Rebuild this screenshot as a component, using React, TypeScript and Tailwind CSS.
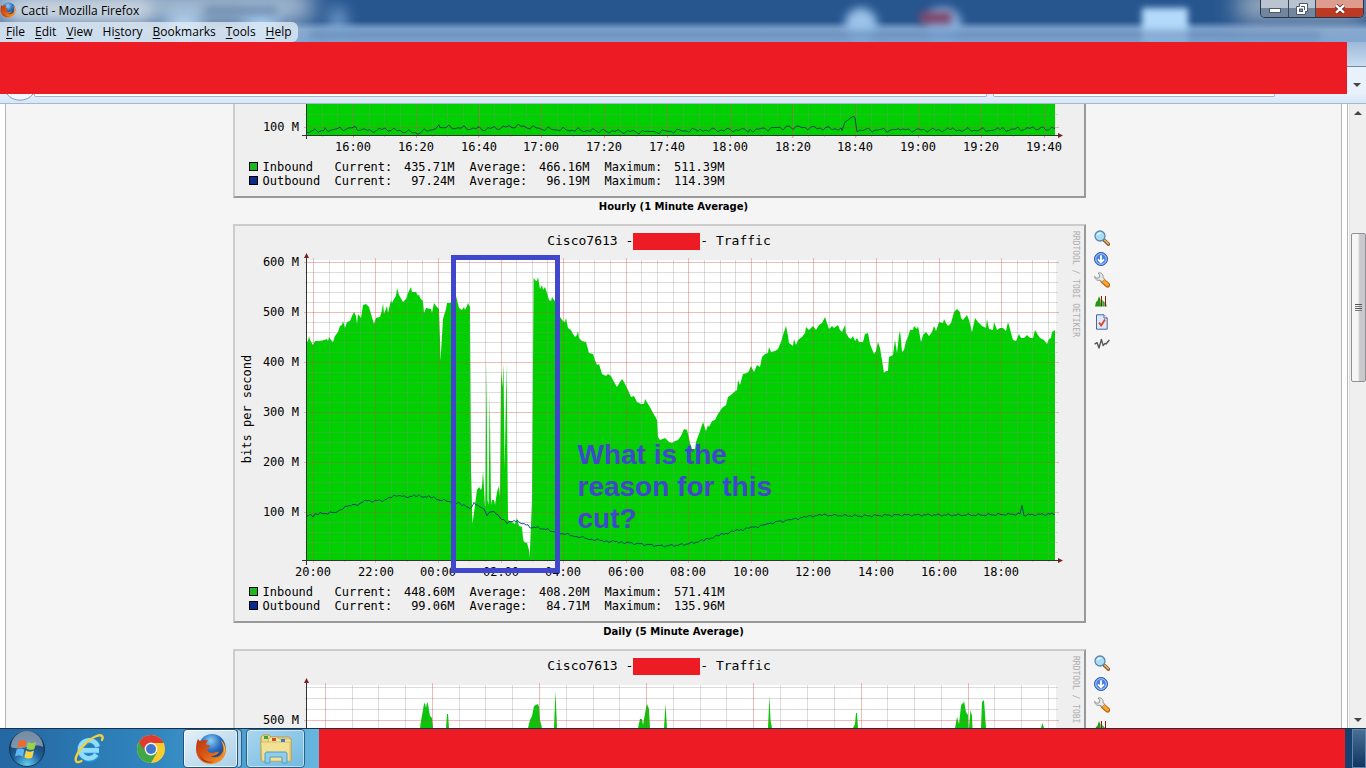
import type { ReactNode } from "react";

type Point = [number, number];

type Series = {
  name: string;
  color: string;
  current: string;
  average: string;
  maximum: string;
};

const MENU = [
  { before: "", key: "F", after: "ile" },
  { before: "", key: "E", after: "dit" },
  { before: "", key: "V", after: "iew" },
  { before: "Hi", key: "s", after: "tory" },
  { before: "", key: "B", after: "ookmarks" },
  { before: "", key: "T", after: "ools" },
  { before: "", key: "H", after: "elp" },
];

const HOURLY: Series[] = [
  { name: "Inbound", color: "bg-[#1fb81f]", current: "435.71M", average: "466.16M", maximum: "511.39M" },
  { name: "Outbound", color: "bg-[#0a2a8c]", current: "97.24M", average: "96.19M", maximum: "114.39M" },
];

const DAILY: Series[] = [
  { name: "Inbound", color: "bg-[#1fb81f]", current: "448.60M", average: "408.20M", maximum: "571.41M" },
  { name: "Outbound", color: "bg-[#0a2a8c]", current: "99.06M", average: "84.71M", maximum: "135.96M" },
];

const DAILY_IN =
  "306,343 308,341 309,336 310,340 313,345 315,341 320,341 324,340 327,339 328,341 329,337 331,340 333,342 335,336 338,332 340,326 342,325 343,321 345,328 347,322 350,321 352,316 354,312 356,316 357,324 358,314 361,318 363,305 366,304 369,307 371,314 374,324 376,318 380,317 382,310 383,303 384,314 387,306 388,313 391,300 392,303 394,299 396,296 397,288 399,295 403,302 406,299 408,293 409,291 411,287 412,292 416,292 418,296 419,294 420,298 423,301 424,313 426,308 431,309 432,313 434,303 436,306 439,309 440,340 440.5,361 443,319 446,309 447,303 450,303 452,302 454,302 455,292 457,300 459,308 462,310 464,307 465,310 467,306 468,303 470,307 471,470 472.5,524 475,505 477,490 479,487 481,490 482,487 483,471 484,487 485,507 485.4,505 486.4,361 487.5,500 488.6,505 489.7,393 491,505 492,500 494,500 495,505 497,492 499,486 500,497 501,370 502.5,387 503.5,364 504.6,470 506.6,363 508,520 515,524 517,518 519,526 522,527 523,538 524,542 527,543 529,550 529.7,557 532,500 533.6,278 536,281 537,281 538,277 540,289 542,285 543,290 545,287 547,293 549,300 551,301 552,297 554,300 556,302 558,308 560,317 563,321 565,322 566,318 568,328 571,330 573,334 575,337 577,335 578,331 579,338 582,341 586,342 589,353 593,354 595,360 597,365 599,364 602,374 606,376 608,374 611,376 614,382 617,387 620,382 622,379 624,382 628,390 631,397 634,396 637,402 641,404 644,404 645,399 648,404 651,409 653,413 656,418 657,420 658,437 660,440 665,438 669,442 672,443 675,441 678,440 681,436 684,429 687,430 689,438 690,443 692,449 695,449 696,442 699,434 703,422 704,425 706,431 708,425 709,427 712,421 715,420 718,414 722,408 726,405 728,397 731,395 734,392 737,390 738,380 740,385 743,374 747,373 749,371 751,366 754,372 757,365 760,367 762,357 765,354 768,353 769,347 771,352 775,351 778,349 781,342 783,335 786,326 788,336 789,343 793,346 794,339 796,345 798,340 802,337 805,333 806,327 809,330 813,326 816,330 819,325 822,323 825,317 827,323 829,329 832,326 834,328 838,325 840,330 842,332 845,325 846,333 849,338 851,339 853,336 855,341 857,338 859,342 863,342 865,334 868,333 870,344 874,354 876,351 878,342 880,348 882,360 884,373 886,371 888,371 889,357 893,355 895,340 897,353 899,335 900,331 901,340 902,352 904,350 906,341 908,337 910,330 913,330 914,326 917,329 918,326 919,331 921,342 923,335 926,332 929,336 932,332 934,326 936,331 939,322 943,323 944,319 946,323 948,326 951,323 954,312 957,309 960,312 961,318 963,320 967,315 969,320 972,332 975,318 978,322 982,326 986,328 987,319 989,329 993,330 994,322 997,330 1000,328 1003,328 1006,331 1008,322 1010,329 1013,340 1016,341 1019,334 1021,338 1024,338 1027,335 1030,338 1033,338 1035,330 1038,335 1040,338 1044,340 1047,344 1049,339 1051,338 1052,332 1055,330";

const DAILY_OUT: Point[] = [
  [306, 515], [313, 516], [318, 514], [330, 513], [337, 512], [343, 508], [352, 505], [360, 504], [365, 501],
  [375, 501], [385, 500], [392, 497], [398, 495], [404, 497], [415, 496], [430, 497], [440, 500], [455, 502],
  [462, 505], [470, 508], [474, 504], [482, 507], [487, 515], [492, 511], [500, 517], [507, 523], [512, 521],
  [520, 522], [530, 527], [540, 528], [552, 531], [560, 533], [575, 536], [590, 539], [605, 541], [620, 542],
  [640, 544], [662, 546], [680, 545], [692, 543], [705, 540], [720, 535], [735, 531], [750, 528], [765, 525],
  [775, 522], [790, 520], [805, 517], [820, 515], [860, 516], [900, 515], [940, 515], [980, 515], [1020, 514],
  [1022, 506], [1024, 515], [1055, 514],
];

const HOURLY_OUT: Point[] = [
  [306, 132], [325, 130], [355, 128], [370, 131], [385, 129], [418, 133], [440, 127], [485, 129], [518, 126],
  [545, 129], [600, 131], [650, 132], [700, 130], [750, 130], [790, 127], [842, 129], [845, 122], [848, 119],
  [855, 118], [857, 130], [900, 130], [950, 130], [1000, 130], [1040, 128], [1055, 129],
];

const WEEKLY_SPIKES =
  "M420 728 L421 721 424 704 425 703 426 708 427 702 428 704 430 716 432 718 433 728Z M446 728 L447 714 448 714 449 728Z M528 728 L530 720 532 716 534 706 538 704 539 707 540 720 542 728Z M554 728 L555.5 691 557 728Z M638 728 L640 719 642 719 643 725 646 708 647 704 649 709 650 728Z M664 728 L665.5 704 667 728Z M768 728 L769.5 696 770.5 720 772 728Z M853 728 L855 724 856 713 857 713 858 728Z M955 728 L957 717 959 724 961 706 962 703 963 704 964 701 966 712 968 715 968.5 728Z M969 728 L970.5 710 972 716 972.5 728Z M981 728 L982 702 984 700 986 728Z M1041 728 L1042.5 723 1044 728Z";

// small repeatable wobble so that the outbound line is not perfectly smooth
function jagged(points: Point[], amount: number, step: number) {
  const out: string[] = [];
  for (let i = 0; i < points.length - 1; i++) {
    const [x1, y1] = points[i];
    const [x2, y2] = points[i + 1];
    for (let x = x1; x < x2; x += step) {
      const y = y1 + ((y2 - y1) * (x - x1)) / (x2 - x1);
      out.push(`${x},${(y + Math.sin(x * 1.9) * Math.cos(x * 0.63) * amount).toFixed(1)}`);
    }
  }
  out.push(points[points.length - 1].join(","));
  return out.join(" ");
}

function range(from: number, to: number, step: number) {
  const values: number[] = [];
  for (let v = from; v <= to; v += step) {
    values.push(Math.floor(v) + 0.5);
  }
  return values;
}

function Grid({
  top,
  bottom,
  minorX,
  majorX,
  minorY,
  majorY,
}: {
  top: number;
  bottom: number;
  minorX: number[];
  majorX: number[];
  minorY: number[];
  majorY: number[];
}) {
  return (
    <g>
      {minorX.map((x) => (
        <path key={x} d={`M${x} ${top}V${bottom + 2}`} stroke="#8c8c8c" strokeOpacity="0.3" />
      ))}
      {minorY.map((y) => (
        <path key={y} d={`M305 ${y}H1058`} stroke="#8c8c8c" strokeOpacity="0.3" />
      ))}
      {majorX.map((x) => (
        <path key={x} d={`M${x} ${top - 2}V${bottom + 3}`} stroke="#c84b46" strokeOpacity="0.36" />
      ))}
      {majorY.map((y) => (
        <path key={y} d={`M304 ${y}H1059`} stroke="#c84b46" strokeOpacity="0.36" />
      ))}
    </g>
  );
}

function AxisText({ x, y, anchor, children }: { x: number; y: number; anchor: "middle" | "end"; children: ReactNode }) {
  return (
    <text x={x} y={y} textAnchor={anchor} className="fill-black font-['DejaVu_Sans_Mono',monospace] text-[12px]">
      {children}
    </text>
  );
}

function HourlyPlot() {
  const labels = ["16:00", "16:20", "16:40", "17:00", "17:20", "17:40", "18:00", "18:20", "18:40", "19:00", "19:20", "19:40"];
  return (
    <svg viewBox="235 104 835 51" className="block w-full" role="img" aria-label="Hourly traffic">
      <rect x="306" y="104" width="749" height="31" fill="#00cf00" />
      <Grid
        top={100}
        bottom={135}
        minorX={range(322.2, 1050, 15.7)}
        majorX={labels.map((_, i) => Math.floor(353.3 + i * 62.8) + 0.5)}
        minorY={[114.5]}
        majorY={[127.5]}
      />
      <polyline points={jagged(HOURLY_OUT, 2.6, 3)} fill="none" stroke="#003c5a" strokeOpacity="0.85" />
      <path d="M306.5 104V139 M302 135.5H1060" stroke="#333" fill="none" />
      <path d="M1058 133L1063 135.5 1058 138Z" fill="#7a2020" />
      <AxisText x={299} y={131} anchor="end">100 M</AxisText>
      {labels.map((label, i) => (
        <AxisText key={label} x={353 + Math.round(i * 62.8)} y={151} anchor="middle">{label}</AxisText>
      ))}
    </svg>
  );
}

function DailyPlot() {
  const labels = ["20:00", "22:00", "00:00", "02:00", "04:00", "06:00", "08:00", "10:00", "12:00", "14:00", "16:00", "18:00"];
  return (
    <svg viewBox="235 252 835 328" className="block w-full" role="img" aria-label="Daily traffic">
      <rect x="306" y="260" width="750" height="300" fill="#fff" />
      <polygon points={`306,560 ${DAILY_IN} 1055,560`} fill="#00cf00" />
      <Grid
        top={260}
        bottom={560}
        minorX={range(313.4, 1056, 15.64).filter((_, i) => i % 4 !== 0)}
        majorX={labels.map((_, i) => Math.floor(313.4 + i * 62.56) + 0.5)}
        minorY={range(272, 555, 10).filter((y) => (y - 262.5) % 50 !== 0)}
        majorY={range(262, 520, 50)}
      />
      <polyline points={jagged(DAILY_OUT, 1.6, 2)} fill="none" stroke="#003878" strokeOpacity="0.85" />
      <path d="M306.5 256V565 M302 560.5H1060" stroke="#333" fill="none" />
      <path d="M304 258L306.5 253 309 258Z M1058 558L1063 560.5 1058 563Z" fill="#7a2020" />
      {[600, 500, 400, 300, 200, 100].map((v, i) => (
        <AxisText key={v} x={299} y={266 + i * 50} anchor="end">{`${v} M`}</AxisText>
      ))}
      {labels.map((label, i) => (
        <AxisText key={label} x={313 + Math.round(i * 62.56)} y={576} anchor="middle">{label}</AxisText>
      ))}
      <g transform="translate(251 409) rotate(-90)">
        <AxisText x={0} y={0} anchor="middle">bits per second</AxisText>
      </g>
    </svg>
  );
}

function WeeklyPlot() {
  return (
    <svg viewBox="235 677 835 51" className="block w-full" role="img" aria-label="Weekly traffic">
      <rect x="306" y="685" width="750" height="43" fill="#fff" />
      <path d={WEEKLY_SPIKES} fill="#0cc40c" />
      <Grid
        top={685}
        bottom={730}
        minorX={range(325.3, 1056, 26.78).filter((_, i) => i % 4 !== 0)}
        majorX={range(325.3, 1000, 107.15)}
        minorY={[687.5, 698.5, 709.5]}
        majorY={[720.5]}
      />
      <path d="M306.5 681V728" stroke="#333" />
      <path d="M304 683L306.5 678 309 683Z" fill="#7a2020" />
      <AxisText x={299} y={724} anchor="end">500 M</AxisText>
    </svg>
  );
}

function Legend({ rows }: { rows: Series[] }) {
  return (
    <table className="mt-[5px] ml-[14px] table-fixed text-left text-[12px] leading-[14px]">
      <tbody>
        {rows.map((row) => (
          <tr key={row.name}>
            <td className="w-[14px] p-0 pt-[2px] align-top">
              <span className={`block size-[9px] border border-black ${row.color}`} />
            </td>
            <th scope="row" className="w-[72px] p-0 font-normal">{row.name}</th>
            <td className="w-[69px] p-0">Current:</td>
            <td className="w-[51px] p-0 text-right">{row.current}</td>
            <td className="w-[84px] p-0 pl-[15px]">Average:</td>
            <td className="w-[51px] p-0 text-right">{row.average}</td>
            <td className="w-[84px] p-0 pl-[15px]">Maximum:</td>
            <td className="w-[51px] p-0 text-right">{row.maximum}</td>
          </tr>
        ))}
      </tbody>
    </table>
  );
}

function GraphTitle() {
  return (
    <h2 className="flex h-[26px] items-center justify-center pt-1 pl-[14px] text-[13px] leading-[22px] whitespace-pre">
      <span>Cisco7613 -</span>
      <span className="h-[17px] w-[67px] bg-[#ed1c24]" />
      <span>- Traffic</span>
    </h2>
  );
}

function Graph({ children, clipped, actions }: { children: ReactNode; clipped?: boolean; actions?: boolean }) {
  return (
    <section className="mx-auto flex w-full max-w-[882px] items-start gap-2">
      <div
        className={`flex flex-1 border-2 border-t-[#ccc] border-r-[#999] border-b-[#999] border-l-[#ccc] bg-[#efefef] font-['DejaVu_Sans_Mono',monospace] text-black ${
          clipped ? "border-t-0" : ""
        }`}
      >
        <div className="relative min-w-0 flex-1 pb-2">{children}</div>
        <div className="w-[14px] pr-[3px]">
          {!clipped && (
            <div className="pt-[5px] text-[8px] leading-[11px] whitespace-nowrap text-[#adadad] [writing-mode:vertical-rl]">
              RRDTOOL / TOBI OETIKER
            </div>
          )}
        </div>
      </div>
      <div className="flex w-[21px] flex-col gap-[5px] pt-[6px]">{actions && <GraphActions />}</div>
    </section>
  );
}

function GraphActions() {
  return (
    <>
      <a href="#zoom" aria-label="Zoom graph">
        <svg viewBox="0 0 16 16" className="size-4">
          <path d="M10 10L14.5 14.2" stroke="#8a5a2c" strokeWidth="3.4" strokeLinecap="round" />
          <path d="M10.6 10.2L14.4 13.8" stroke="#f0b872" strokeWidth="1.4" strokeLinecap="round" />
          <circle cx="6" cy="6" r="5" fill="#a9dcf5" stroke="#5c88ad" strokeWidth="1.3" />
          <path d="M2.6 6A3.4 3.4 0 0 1 8 3.2C6 3.6 4 4.6 2.6 6Z" fill="#effbff" />
        </svg>
      </a>
      <a href="#csv" aria-label="CSV export">
        <svg viewBox="0 0 16 16" className="size-4">
          <circle cx="7" cy="8" r="6.5" fill="#4a82dd" stroke="#2b55ae" />
          <circle cx="7" cy="8" r="5.3" fill="none" stroke="#a9c8f8" />
          <path d="M7 4.2V11M4 8.3L7 11.3 10 8.3" fill="none" stroke="#fff" strokeWidth="1.8" />
        </svg>
      </a>
      <a href="#source" aria-label="Graph source">
        <svg viewBox="0 0 16 16" className="size-4">
          <path d="M9 9L13.6 13" stroke="#b8630c" strokeWidth="5" strokeLinecap="round" />
          <path d="M9.4 9L13.4 12.6" stroke="#f9a52e" strokeWidth="3.2" strokeLinecap="round" />
          <path
            d="M4.2 1C7 .2 9.6 2.2 9 5.2L10.6 7.4 8 9.8 6 8.2C3.4 9 .8 7.4 .6 4.4L3 6.4 5.2 5.6 5.6 3.2Z"
            fill="#e6e6e6"
            stroke="#8c8c8c"
            strokeWidth="0.9"
          />
        </svg>
      </a>
      <a href="#preview" aria-label="Preview">
        <svg viewBox="0 0 16 16" className="size-4">
          <path d="M1 13.5L2 9 3.4 8 5 3.2 6.4 6 7 13.5Z" fill="#1d9a12" />
          <path d="M7.5 3V13.5M11.5 3V13.5" stroke="#8b1a14" />
          <path d="M8.2 13.5V7L10.8 9.6V13.5Z M12.2 13.5V10.5L13 13.5Z" fill="#3aa92c" />
        </svg>
      </a>
      <a href="#report" aria-label="Report">
        <svg viewBox="0 0 16 16" className="size-4">
          <path d="M2.5 .8H10L13.2 4V15.2H2.5Z" fill="#dbe9fb" stroke="#4d6597" />
          <path d="M10 .8V4H13.2" fill="#fff" stroke="#4d6597" />
          <path d="M5 8.6L7.2 11.4 11 5.6" fill="none" stroke="#d8432e" strokeWidth="1.8" />
        </svg>
      </a>
      <a href="#realtime" aria-label="Realtime view">
        <svg viewBox="0 0 16 16" className="size-4">
          <path
            d="M.6 9.2L3 7.6 5 13 7.4 4.4 9.2 10.6 11 8.4 12 9 15.4 5"
            fill="none"
            stroke="#555"
            strokeWidth="1.4"
            strokeLinejoin="round"
          />
        </svg>
      </a>
    </>
  );
}

function Caption({ children }: { children: ReactNode }) {
  return (
    <p className="h-[26px] text-center font-['DejaVu_Sans',Verdana,sans-serif] text-[10px] leading-[17px] font-bold text-black">
      {children}
    </p>
  );
}

function FirefoxLogo({ className }: { className: string }) {
  return (
    <svg viewBox="0 0 32 32" className={className} aria-hidden="true">
      <defs>
        <radialGradient id="globe" cx="0.45" cy="0.25" r="0.8">
          <stop offset="0" stopColor="#8fd0f4" />
          <stop offset="0.45" stopColor="#2c6fc0" />
          <stop offset="1" stopColor="#142a66" />
        </radialGradient>
        <linearGradient id="fox" x1="0" y1="0" x2="1" y2="1">
          <stop offset="0" stopColor="#b8330f" />
          <stop offset="0.5" stopColor="#dd5c16" />
          <stop offset="1" stopColor="#f6a92c" />
        </linearGradient>
      </defs>
      <circle cx="17" cy="14.5" r="13.5" fill="url(#globe)" />
      <path
        d="M3 6C4 7.2 4.6 8 5.4 8.4 8 6.6 11 6.6 13.4 7.4 12 8.4 11 9.6 10.8 11.4L15.2 12.4C15 14 13 14.8 12.2 15.6 12 18 14 20 17 20 20 20 22 18.4 24 19 22.4 22 18.6 23.4 15.6 23 20 26 26.4 23.6 28 17.6 28.6 14 27.6 10.4 25.8 7.2 30 10.4 31.6 14.6 30.8 19 29.6 26 23.6 31 16 31 7.6 31 1 24.6 1 16.4 1 12 1.8 8.6 3 6Z"
        fill="url(#fox)"
      />
      <path d="M25.8 7.2C30 11 31 17 28.4 22 30 16 28.6 11 25.8 7.2Z" fill="#fbd34b" />
      <path d="M4 20C6 27 13 30 19 28.4 12 31.6 5.4 27.6 4 20Z" fill="#8f260c" />
    </svg>
  );
}

function WindowControls() {
  return (
    <div className="ml-auto mr-[2px] flex h-[18px] overflow-hidden rounded-b-[5px] border border-t-0 border-[#25354d] text-white">
      <button aria-label="Minimize" className="flex w-7 items-end justify-center border-r border-[#33475f] bg-linear-to-b from-[#b9c4d0] from-45% to-[#73869d] to-50% pb-1">
        <svg viewBox="0 0 12 5" className="h-[5px] w-3">
          <rect x="0.5" y="0.5" width="11" height="4" fill="#fff" stroke="#4c5868" />
        </svg>
      </button>
      <button aria-label="Restore" className="flex w-[27px] items-center justify-center border-r border-[#33475f] bg-linear-to-b from-[#b9c4d0] from-45% to-[#73869d] to-50%">
        <svg viewBox="0 0 12 12" className="size-3">
          <path d="M3.5 .5H11.5V8.5H9.5V11.5H.5V3.5H3.5Z" fill="#fff" stroke="#4c5868" />
          <path d="M5 3.5H8.5V7" fill="none" stroke="#4c5868" />
          <rect x="3.5" y="6" width="3" height="2.5" fill="#7f8fa3" stroke="#4c5868" />
        </svg>
      </button>
      <button aria-label="Close" className="flex w-[47px] items-center justify-center bg-linear-to-b from-[#dd9c8e] from-45% to-[#bd3a22] to-50%">
        <svg viewBox="0 0 12 10" className="h-[10px] w-3">
          <path d="M2 1.4L10 8.6M10 1.4L2 8.6" stroke="#5a2a2a" strokeWidth="4" />
          <path d="M2 1.4L10 8.6M10 1.4L2 8.6" stroke="#fff" strokeWidth="2.4" />
        </svg>
      </button>
    </div>
  );
}

function BrowserChrome() {
  return (
    <header className="shrink-0">
      <div className="relative overflow-hidden bg-linear-to-b from-[#27568f] from-50% to-[#82a6d0] to-70%">
        <div className="absolute -top-3 -left-4 h-9 w-[330px] rounded-full bg-[#a9bdd2] blur-md" />
        <div className="absolute top-0 left-2 h-5 w-36 rounded-full bg-[#cfd8e2] blur-sm" />
        <div className="absolute top-3 left-[168px] h-7 w-8 bg-[#b5d3ee] blur-sm" />
        <div className="absolute top-3 left-[245px] h-7 w-8 bg-[#a5cbef] blur-sm" />
        <div className="absolute top-2 left-[332px] h-8 w-3 bg-[#88b0dc] blur-sm" />
        <div className="absolute top-[7px] left-[205px] h-[7px] w-[72px] bg-[#6a87ab] blur-[4px]" />
        <div className="absolute top-2 left-[845px] h-8 w-8 rounded-full bg-[#9cc4ea] blur-[5px]" />
        <div className="absolute top-2 left-[925px] h-8 w-9 rounded-full bg-[#8db8e4] blur-[5px]" />
        <div className="absolute top-3 left-[920px] h-3 w-8 bg-[#7d3f63] blur-[4px]" />
        <div className="absolute top-2 left-[1142px] h-8 w-[46px] bg-[#b4dafb] blur-[3px]" />
        <div className="absolute top-[32px] left-[310px] h-[6px] w-[1010px] bg-[#6288b6] blur-[4px]" />
        <div className="absolute -top-2 right-0 h-7 w-32 bg-[#a9b6c6] blur-md" />

        <div className="relative flex h-[22px] items-start">
          <FirefoxLogo className="mt-[2px] size-4" />
          <h1 className="ml-[5px] font-['Open_Sans','Noto_Sans',sans-serif] text-[12px] leading-[21px] text-black">
            Cacti - Mozilla Firefox
          </h1>
          <WindowControls />
        </div>
        <nav className="relative flex h-5">
          <div className="flex gap-[10px] rounded-r-md bg-[#e4edf6]/75 px-[6px] font-['Open_Sans','Noto_Sans',sans-serif] text-[12px] leading-5 text-black">
            {MENU.map((item) => (
              <button key={item.key + item.after}>
                {item.before}
                <span className="underline underline-offset-2">{item.key}</span>
                {item.after}
              </button>
            ))}
          </div>
        </nav>
      </div>

      <div className="flex h-[52px]">
        <div className="flex-1 bg-[#ed1c24]" />
        <div className="flex w-[19px] flex-col">
          <div className="h-[25px] border-b border-[#7389a4] bg-linear-to-b from-[#9db9d8] to-[#c9ddf2]" />
          <button aria-label="More tools" className="flex flex-1 items-center justify-center bg-[#e9f2fc] pt-2">
            <svg viewBox="0 0 8 4" className="h-1 w-2">
              <path d="M0 0H8L4 4Z" fill="#444" />
            </svg>
          </button>
        </div>
      </div>

      <div className="flex h-[10px] items-start overflow-hidden border-b border-[#a3b9d0] bg-linear-to-b from-[#e6f0fa] to-[#d7e7f7]">
        <svg viewBox="0 0 34 9" className="h-[9px] w-[34px]" aria-hidden="true">
          <path d="M7 0C13 8.2 27 8.2 33 0" fill="#f4f8fc" stroke="#8196b0" />
        </svg>
        <div className="h-[3px] flex-1 rounded-b-xs border border-t-0 border-[#a2b3c8] bg-white" />
        <div className="mr-[91px] ml-[6px] h-[3px] w-[282px] rounded-b-xs border border-t-0 border-[#a2b3c8] bg-white" />
      </div>
    </header>
  );
}

function Scrollbar() {
  return (
    <div className="flex w-[17px] flex-col items-center border-l border-[#e2e2e2] bg-[#efefef]">
      <button aria-label="Scroll up" className="flex h-[17px] w-full items-center justify-center">
        <svg viewBox="0 0 8 4" className="h-1 w-2">
          <path d="M0 4H8L4 0Z" fill="#444" />
        </svg>
      </button>
      <div className="mt-28 flex h-[149px] w-[15px] flex-col items-center justify-center gap-px rounded-xs border border-[#909090] bg-linear-to-r from-[#f6f6f6] from-45% to-[#c9c9cd] to-60%">
        <span className="h-px w-[7px] bg-[#555]" />
        <span className="h-px w-[7px] bg-[#777]" />
        <span className="h-px w-[7px] bg-[#555]" />
        <span className="h-px w-[7px] bg-[#777]" />
      </div>
      <button aria-label="Scroll down" className="mt-auto flex h-[17px] w-full items-center justify-center">
        <svg viewBox="0 0 8 4" className="h-1 w-2">
          <path d="M0 0H8L4 4Z" fill="#444" />
        </svg>
      </button>
    </div>
  );
}

function Taskbar() {
  return (
    <footer className="flex h-10 shrink-0 border-t border-[#1b2f45] bg-[#1b4272]">
      <div className="flex w-[319px] items-stretch bg-linear-to-r from-[#2467a2] via-[#3187c0] to-[#66b6e0]">
        <button aria-label="Start" className="flex w-[54px] items-center justify-center">
          <svg viewBox="0 0 38 38" className="size-[38px]">
            <defs>
              <radialGradient id="orb" cx="0.5" cy="0.95" r="0.85">
                <stop offset="0" stopColor="#5fd0f2" />
                <stop offset="0.5" stopColor="#1f5f9a" />
                <stop offset="1" stopColor="#1c3557" />
              </radialGradient>
            </defs>
            <circle cx="19" cy="19" r="17.5" fill="url(#orb)" stroke="#18344f" />
            <path d="M3 17A16 16 0 0 1 35 17C25 12 13 22 3 17Z" fill="#c6d6e4" opacity="0.55" />
            <path d="M10.6 11.4C13 9.6 16 9.6 18.4 11.2L16.8 18C14.4 16.4 11.6 16.6 9 18Z" fill="#ee6a2c" />
            <path d="M20 12C22.6 13.6 25.4 13.4 28.2 12L26.4 19C23.8 20.4 21 20.2 18.4 18.8Z" fill="#9ad24c" />
            <path d="M8.6 19.6C11.2 18.2 14 18 16.4 19.6L14.8 26.6C12.2 25 9.6 25.2 7 26.4Z" fill="#5fb6f2" />
            <path d="M18 20.4C20.6 22 23.4 22 26 20.6L24.2 27.6C21.6 29 18.8 28.8 16.4 27.2Z" fill="#fbd445" />
          </svg>
        </button>
        <button aria-label="Internet Explorer" className="flex w-[70px] items-center justify-center">
          <svg viewBox="0 0 32 32" className="size-8">
            <path d="M26.4 17.6H9M25 14A9 9 0 1 0 24.2 21.6" fill="none" stroke="#2790d4" strokeWidth="6.6" />
            <path d="M26 17.4H9M24.6 13.8A9 9 0 1 0 23.4 21.4" fill="none" stroke="#90dcfb" strokeWidth="4.6" />
            <path
              d="M29 7C31 3 28 1.2 23.6 3 15.6 6 5.4 16.4 3 24.4 1.8 28.6 4 30.4 8.4 28"
              fill="none"
              stroke="#f3cf3c"
              strokeWidth="2.4"
              strokeLinecap="round"
            />
          </svg>
        </button>
        <button aria-label="Chrome" className="flex w-[54px] items-center justify-center">
          <svg viewBox="0 0 30 30" className="size-[30px]">
            <circle cx="15" cy="15" r="14" fill="#f7cd2e" />
            <path d="M15 15L2.9 8A14 14 0 0 0 15 29L21 18.5Z" fill="#41a646" />
            <path d="M2.9 8A14 14 0 0 1 27.7 9H15A6.4 6.4 0 0 0 9 17Z" fill="#dd3c2f" />
            <circle cx="15" cy="15" r="6.4" fill="#f4f4f4" />
            <circle cx="15" cy="15" r="5" fill="#3f78c8" />
          </svg>
        </button>
        <button aria-label="Firefox" className="ml-[5px] flex w-[55px] items-center justify-center rounded-sm border border-[#24527a] bg-linear-to-br from-[#e3f1f9] to-[#a9cfe6] inset-ring inset-ring-white/70">
          <FirefoxLogo className="size-8" />
        </button>
        <span className="w-1 rounded-r-sm border border-l-0 border-[#2b5f8a] bg-[#a5d0ea]" />
        <button aria-label="Windows Explorer" className="ml-1 flex w-[59px] items-center justify-center rounded-sm border border-[#2b5f8a] bg-linear-to-br from-[#a9d6ee] to-[#72b9e0] inset-ring inset-ring-white/50">
          <svg viewBox="0 0 34 32" className="h-8 w-[34px]">
            <path d="M2 4L4 2H10L12 4H30L32 6V27H2Z" fill="#efd98c" stroke="#b79a45" />
            <path d="M10 5L12 4H18L20 6H32V28H4Z" fill="#f5e6a6" stroke="#c2a752" strokeWidth="0.8" />
            <path d="M2 9H31V28H3Z" fill="#f3e193" stroke="#c2a752" strokeWidth="0.6" />
            <rect x="5" y="3" width="4" height="3" fill="#3aa63a" />
            <rect x="13" y="5" width="4" height="3" fill="#cf4a2a" />
            <rect x="22" y="6" width="4" height="3" fill="#3a78c8" />
            <path d="M6 30V21C6 19.6 7 19 8 19H26C27.4 19 28 19.6 28 21V30H23V24H11V30Z" fill="#8fcdea" stroke="#4f9cc4" />
          </svg>
        </button>
      </div>
      <div className="flex-1 bg-[#ed1c24]" />
      <div className="flex w-[21px] justify-end bg-[#17406f]">
        <button aria-label="Show desktop" className="w-[14px] border border-[#5f86ad] bg-linear-to-b from-[#4a6f96] to-[#0f3560]" />
      </div>
    </footer>
  );
}

export default function App() {
  return (
    <div className="flex h-screen flex-col overflow-hidden bg-white">
      <BrowserChrome />
      <div className="flex min-h-0 flex-1">
        <main className="ml-[5px] min-w-0 flex-1 overflow-hidden border-x border-[#b5b5b5] bg-[#f5f5f5]">
          <Graph clipped>
            <HourlyPlot />
            <Legend rows={HOURLY} />
          </Graph>
          <Caption>Hourly (1 Minute Average)</Caption>
          <Graph actions>
            <GraphTitle />
            <DailyPlot />
            <Legend rows={DAILY} />
            {/* marker and note drawn over the graph */}
            <div className="absolute top-[29px] left-[216px] h-[318px] w-[109px] border-5 border-[#3f48cc]" />
            <p className="absolute top-[213px] left-[343px] w-[210px] font-['Liberation_Sans',Arial,sans-serif] text-[28px] leading-8 font-bold text-[#3f48cc]">
              What is the reason for this cut?
            </p>
          </Graph>
          <Caption>Daily (5 Minute Average)</Caption>
          <Graph actions>
            <GraphTitle />
            <WeeklyPlot />
          </Graph>
        </main>
        <div className="mr-px w-[6px] border-r border-[#b5b5b5]" />
        <Scrollbar />
      </div>
      <Taskbar />
    </div>
  );
}
